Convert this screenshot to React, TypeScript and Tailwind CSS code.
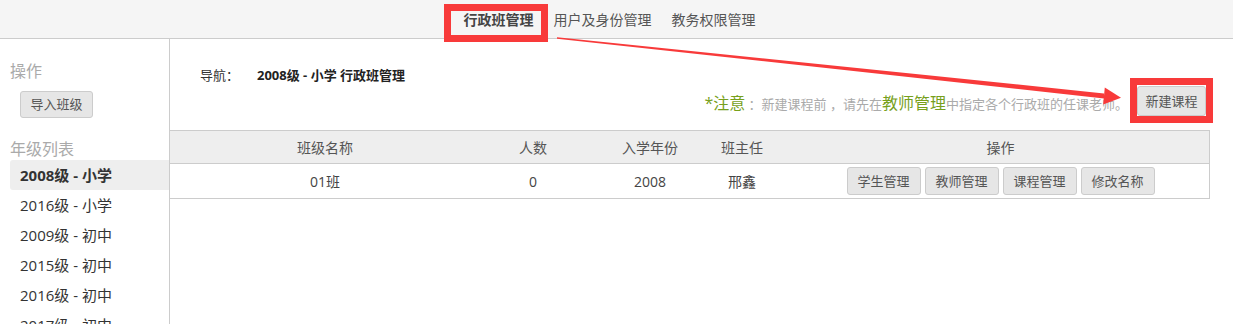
const navItems = ["行政班管理", "用户及身份管理", "教务权限管理"];

const grades = [
  "2008级 - 小学",
  "2016级 - 小学",
  "2009级 - 初中",
  "2015级 - 初中",
  "2016级 - 初中",
  "2017级 - 初中",
];

const rowActions = ["学生管理", "教师管理", "课程管理", "修改名称"];

function GreyButton({ label, className }: { label: string; className: string }) {
  return (
    <button
      className={`bg-[#e6e6e6] border border-[#cccccc] rounded-[3px] text-[#555] text-[13px] leading-none ${className}`}
    >
      {label}
    </button>
  );
}

function Annotations() {
  return (
    <>
      <div className="absolute left-[444px] top-[4px] w-[104px] h-[38px] border-[7px] border-[#f83a3a] pointer-events-none" />
      <div className="absolute left-[1130px] top-[78px] w-[83px] h-[45px] border-[7px] border-[#f83a3a] pointer-events-none" />
      <svg
        className="absolute left-0 top-0 pointer-events-none"
        width="1233"
        height="324"
        viewBox="0 0 1233 324"
      >
        <polygon
          points="557,37.3 1104,93.4 1104,98.4 557,38.7"
          fill="#f83a3a"
        />
        <polygon points="1104.8,87.5 1121,97.7 1103.2,104.5" fill="#f83a3a" />
      </svg>
    </>
  );
}

export default function App() {
  return (
    <div className="relative w-[1233px] h-[324px] overflow-hidden bg-white font-['Open_Sans','Noto_Sans_CJK_SC',sans-serif] text-[#333]">
      {/* top nav */}
      <div className="h-[39px] bg-[#f5f5f5] border-b border-[#cccccc] flex items-center justify-center gap-[20px] pr-[14px] text-[14px]">
        {navItems.map((item, i) => (
          <span
            key={item}
            className={i === 0 ? "font-bold text-[#444]" : "text-[#555]"}
          >
            {item}
          </span>
        ))}
      </div>

      <div className="flex h-[285px]">
        {/* sidebar */}
        <div className="w-[170px] shrink-0 border-r border-[#cccccc] pl-[10px] pt-[21px]">
          <p className="text-[16px] leading-[22px] text-[#aaa]">操作</p>
          <GreyButton label="导入班级" className="mt-[9px] ml-[10px] w-[73px] h-[27px]" />
          <p className="mt-[20px] text-[16px] leading-[22px] text-[#aaa]">年级列表</p>
          <ul>
            {grades.map((g, i) => (
              <li
                key={i}
                className={`h-[30px] leading-[30px] pl-[10px] text-[15px] ${
                  i === 0 ? "bg-[#eeeeee] font-bold rounded-l-[3px] text-[#333]" : "text-[#333]"
                }`}
              >
                {g}
              </li>
            ))}
          </ul>
        </div>

        {/* main */}
        <div className="flex-1 pr-[23px]">
          <div className="pt-[27px] pl-[30px] text-[13px] leading-[18px] flex">
            <span className="w-[57px] text-[#333]">导航：</span>
            <span className="font-bold text-[#222]">2008级 - 小学 行政班管理</span>
          </div>

          <div className="mt-[2px] flex justify-end items-center gap-[9px] pr-[4px]">
            <p className="text-[13px] text-[#aaa] leading-[18px] mt-[4px] whitespace-pre">
              <span className="text-[16px] text-[#77a01c]">*注意</span>
              {" ：新建课程前 ，请先在"}
              <span className="text-[16px] text-[#77a01c]">教师管理</span>
              中指定各个行政班的任课老师。
            </p>
            <GreyButton label="新建课程" className="w-[69px] h-[30px]" />
          </div>

          <div className="mt-[14px] border border-l-0 border-[#cccccc] text-[14px]">
            <div className="grid grid-cols-[310px_106px_128px_56px_1fr] h-[33px] items-center bg-[#eeeeee] border-b border-[#cccccc] text-[#555] text-center">
              <span>班级名称</span>
              <span>人数</span>
              <span>入学年份</span>
              <span>班主任</span>
              <span className="pl-[22px]">操作</span>
            </div>
            <div className="grid grid-cols-[310px_106px_128px_56px_1fr] h-[34px] items-center text-[#444] text-center">
              <span>01班</span>
              <span>0</span>
              <span>2008</span>
              <span>邢鑫</span>
              <div className="pl-[22px] flex justify-center gap-[4px]">
                {rowActions.map((a) => (
                  <GreyButton key={a} label={a} className="w-[74px] h-[28px]" />
                ))}
              </div>
            </div>
          </div>
        </div>
      </div>

      <Annotations />
    </div>
  );
}
